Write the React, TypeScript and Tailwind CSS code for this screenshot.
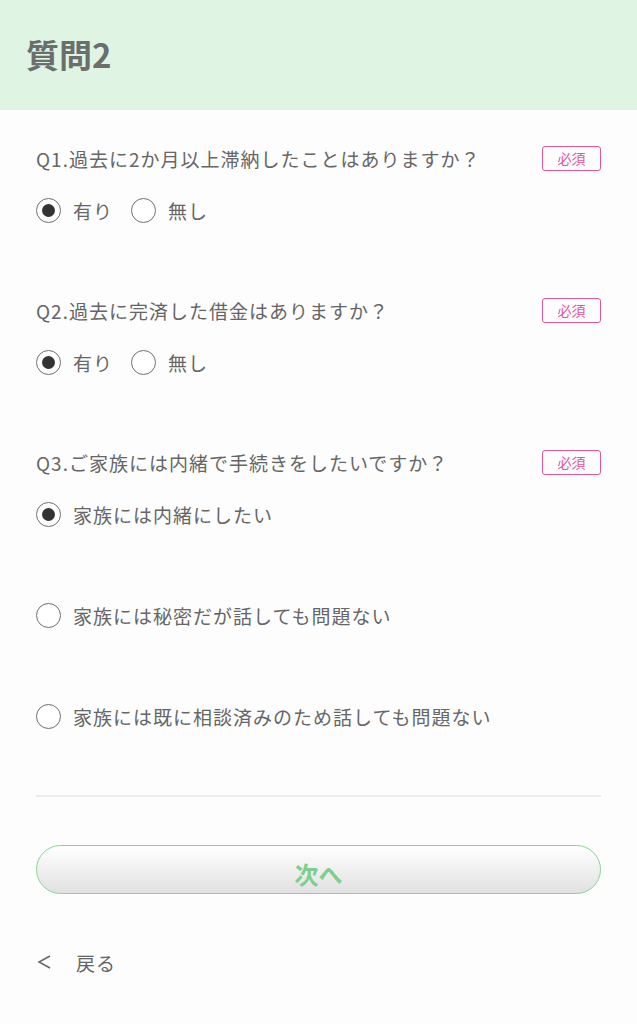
const font = { fontFamily: '"Noto Sans CJK JP", "Noto Sans", sans-serif' };

type Option = { label: string; checked?: boolean };

const Radio = ({ label, checked }: Option) => (
  <label className="flex items-center h-[24px] gap-[12px]">
    <span className="w-[25px] h-[25px] rounded-full border-[1.5px] border-[#6f6f6f] flex items-center justify-center bg-white">
      {checked && <span className="w-[13px] h-[13px] rounded-full bg-[#333]" />}
    </span>
    <span className="text-[19px] text-[#666] tracking-[1px] leading-none">{label}</span>
  </label>
);

const QuestionTitle = ({ text }: { text: string }) => (
  <div className="flex items-center justify-between h-[24px]">
    <span className="text-[19px] text-[#666] tracking-[1px] leading-none">{text}</span>
    <span className="border-[1.5px] border-[#e2579c] text-[#e2579c] text-[14px] rounded-[3px] w-[59px] h-[25px] flex items-center justify-center leading-none">
      必須
    </span>
  </div>
);

export default function App() {
  return (
    <div className="w-[637px] min-h-[1024px] bg-[#fdfdfd]" style={font}>
      <header className="h-[110px] bg-[#e0f4e4] flex items-center px-[26px]">
        <h1 className="text-[33px] font-bold text-[#6a6f6c]">質問2</h1>
      </header>

      <main className="px-[36px] pt-[36px]">
        <QuestionTitle text="Q1.過去に2か月以上滞納したことはありますか？" />
        <div className="flex gap-[18px] mt-[28px]">
          <Radio label="有り" checked />
          <Radio label="無し" />
        </div>

        <div className="mt-[76px]">
          <QuestionTitle text="Q2.過去に完済した借金はありますか？" />
        </div>
        <div className="flex gap-[18px] mt-[28px]">
          <Radio label="有り" checked />
          <Radio label="無し" />
        </div>

        <div className="mt-[76px]">
          <QuestionTitle text="Q3.ご家族には内緒で手続きをしたいですか？" />
        </div>
        <div className="flex flex-col gap-[77px] mt-[28px]">
          <Radio label="家族には内緒にしたい" checked />
          <Radio label="家族には秘密だが話しても問題ない" />
          <Radio label="家族には既に相談済みのため話しても問題ない" />
        </div>

        <hr className="mt-[67px] border-0 h-[2px] bg-[#ececec]" />

        <button className="mt-[48px] w-full h-[49px] rounded-full border-[1.5px] border-[#86d597] bg-gradient-to-b from-[#ffffff] to-[#e1e1e1] text-[24px] font-bold text-[#7dcf8d] flex items-center justify-center leading-none pt-[9px]">
          次へ
        </button>

        <div className="mt-[56px] flex items-center h-[24px] text-[19px] text-[#666] tracking-[1px] leading-none">
          <svg width="40" height="20" viewBox="0 0 40 20" className="shrink-0">
            <polyline points="14,4 3,10 14,16" fill="none" stroke="#666" strokeWidth="1.5" />
          </svg>
          <span>戻る</span>
        </div>
      </main>
    </div>
  );
}
